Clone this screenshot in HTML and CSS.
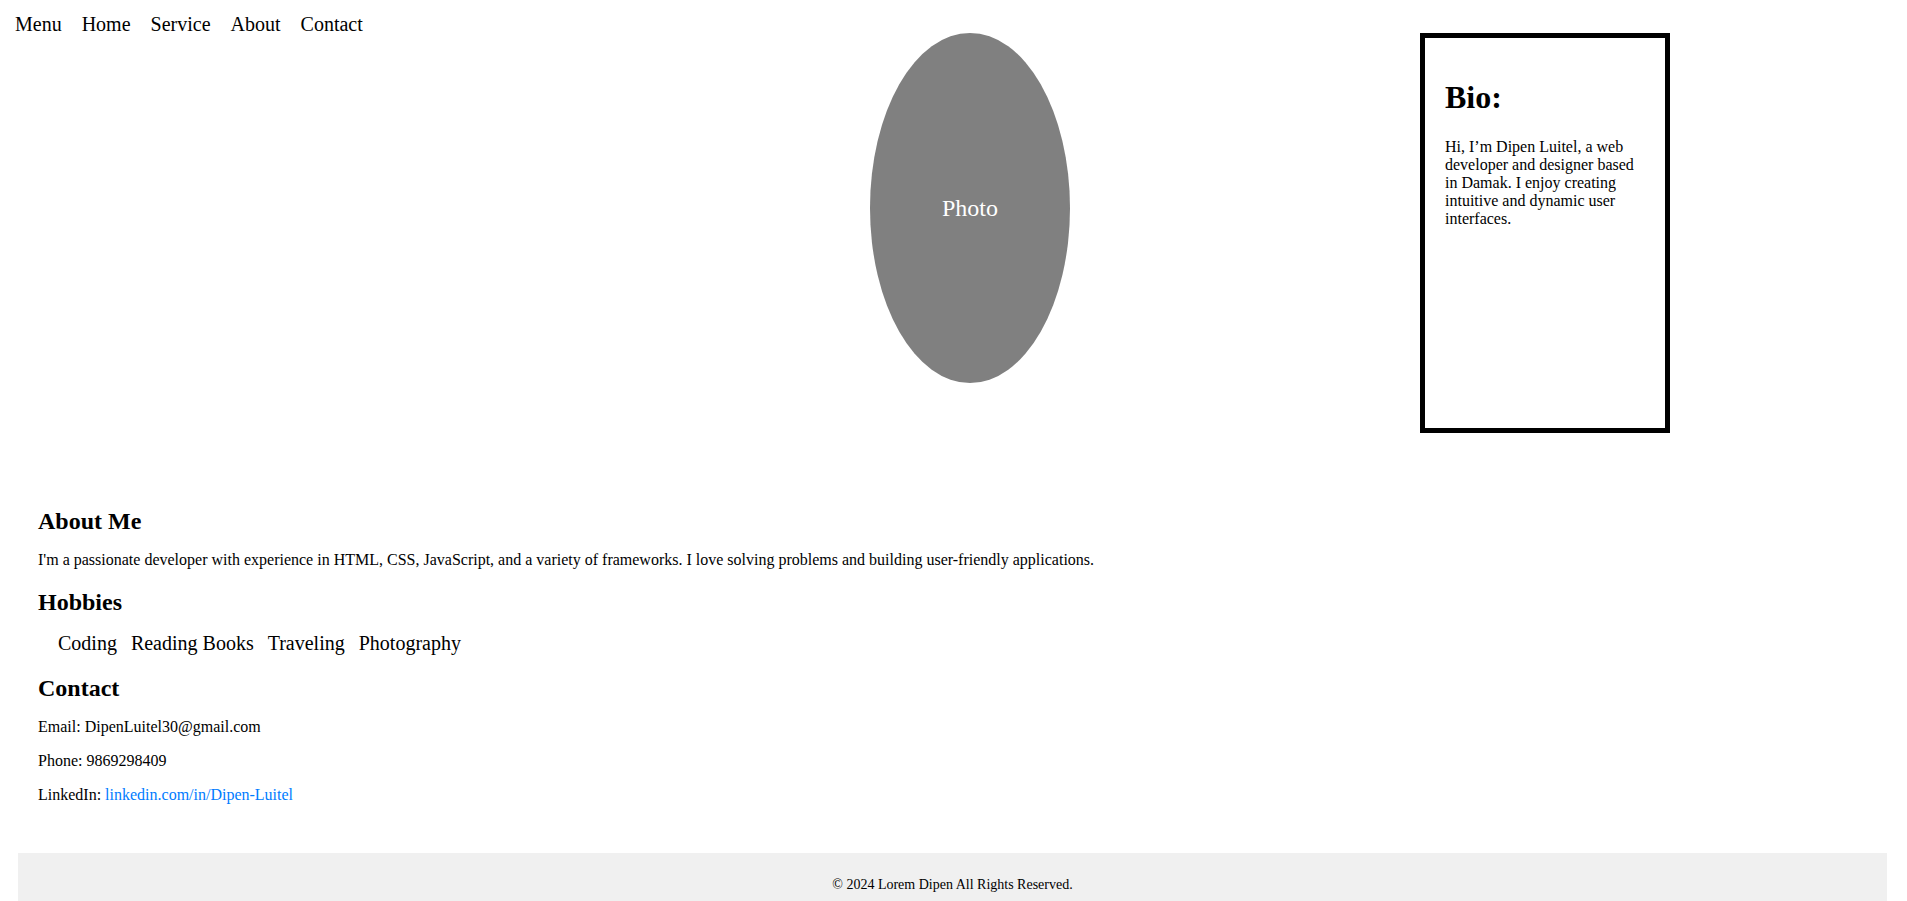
FILE: index.html
```html
<!DOCTYPE html>
<html lang="en">
<head>
<meta charset="utf-8">
<title>Dipen Luitel</title>
<link rel="stylesheet" href="styles.css">
</head>
<body>
<nav class="nav">
  <a class="nav-link" href="#">Menu</a>
  <a class="nav-link" href="#">Home</a>
  <a class="nav-link" href="#">Service</a>
  <a class="nav-link" href="#">About</a>
  <a class="nav-link" href="#">Contact</a>
</nav>
<header class="hero">
  <div class="photo">Photo</div>
  <aside class="bio">
    <h2 class="bio-title">Bio:</h2>
    <p class="bio-text">Hi, I’m Dipen Luitel, a web developer and designer based in Damak. I enjoy creating intuitive and dynamic user interfaces.</p>
  </aside>
</header>
<main class="content">
  <h2 class="section-title">About Me</h2>
  <p class="text">I'm a passionate developer with experience in HTML, CSS, JavaScript, and a variety of frameworks. I love solving problems and building user-friendly applications.</p>
  <h2 class="section-title">Hobbies</h2>
  <ul class="hobbies">
    <li>Coding</li>
    <li>Reading Books</li>
    <li>Traveling</li>
    <li>Photography</li>
  </ul>
  <h2 class="section-title">Contact</h2>
  <p class="text">Email: DipenLuitel30@gmail.com</p>
  <p class="text">Phone: 9869298409</p>
  <p class="text">LinkedIn: <a class="link" href="#">linkedin.com/in/Dipen-Luitel</a></p>
</main>
<footer class="footer">
  <p class="footer-text">© 2024 Lorem Dipen All Rights Reserved.</p>
</footer>
</body>
</html>
```
FILE: styles.css
```css
html, body {
  font-family: "Liberation Serif", "Times New Roman", serif;
  color: #000;
  background: #fff;
}

body {
  margin: 8px;
}

.nav {
  display: flex;
  gap: 20px;
  padding: 8px 0 0 7px;
  font-size: 20px;
  line-height: 17px;
}

.nav-link {
  color: #000;
  text-decoration: none;
}

.hero {
  display: flex;
  align-items: flex-start;
  gap: 350px;
  padding-left: 862px;
  margin-bottom: 35px;
}

.photo {
  width: 200px;
  height: 350px;
  border-radius: 50%;
  background: #808080;
  color: #fff;
  font-size: 24px;
  display: flex;
  align-items: center;
  justify-content: center;
  flex-shrink: 0;
}

.bio {
  box-sizing: border-box;
  width: 250px;
  height: 400px;
  border: 5px solid #000;
  padding: 15px 20px;
  flex-shrink: 0;
}

.bio-title {
  font-size: 32px;
  margin: 25.5px 0 22px;
}

.bio-text {
  font-size: 16px;
  margin: 0;
}

.content {
  margin: 10px;
  padding: 20px;
}

.section-title {
  font-size: 24px;
  margin: 20px 0 16px;
}

.text {
  font-size: 16px;
  margin: 16px 0;
}

.hobbies {
  list-style: none;
  display: flex;
  gap: 14px;
  padding: 0 0 0 20px;
  margin: 16px 0 20px;
  font-size: 20px;
}

.link {
  color: #007bff;
  text-decoration: none;
}

.footer {
  margin: 13px 12px 0 10px;
  padding: 24px 20px 20px;
  background: #f0f0f0;
  text-align: center;
}

.footer-text {
  margin: 0;
  font-size: 14px;
}
```
